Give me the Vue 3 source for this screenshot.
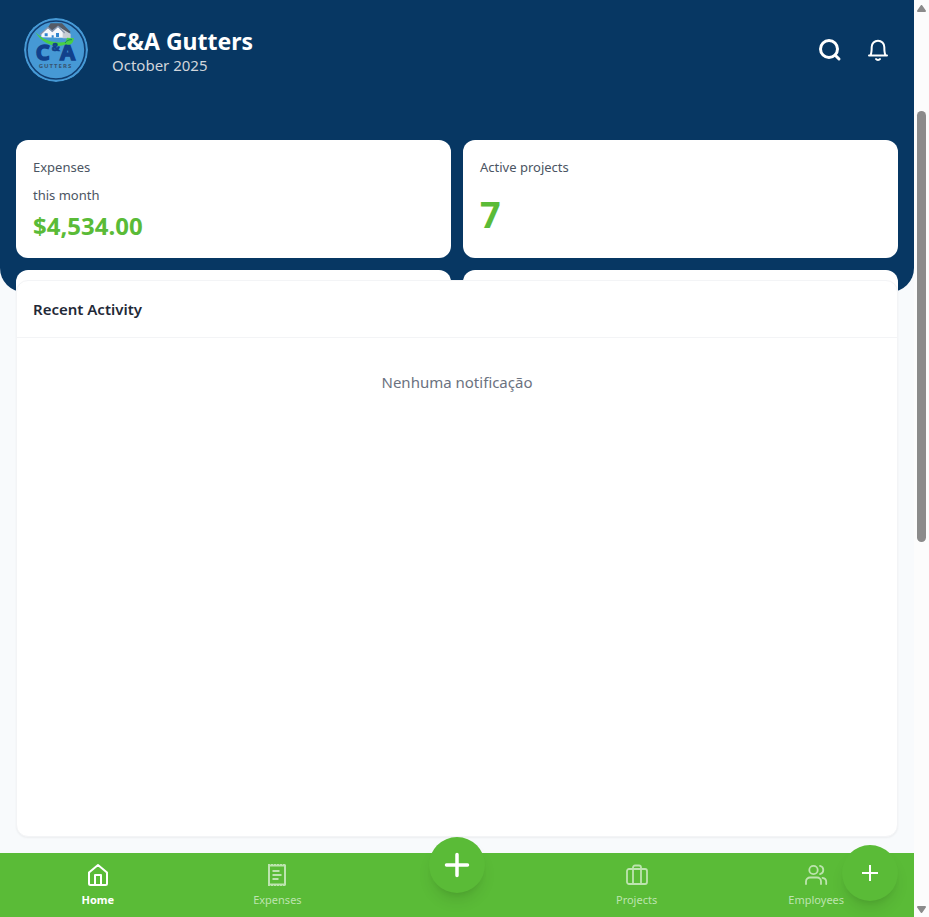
<script setup>
import { ref } from 'vue'

const stats = ref([
  { title: 'Expenses', note: 'this month', value: '$4,534.00', large: false },
  { title: 'Active projects', note: '', value: '7', large: true },
])
const active = ref('Home')
</script>

<template>
  <div class="screen">
    <div class="app">
      <header class="hero">
        <div class="topbar">
          <svg class="logo" viewBox="0 0 192 192" role="img" aria-label="C&amp;A Gutters logo">
            <circle cx="96" cy="96" r="96" fill="#4699d5" />
            <circle cx="96" cy="96" r="87" fill="none" stroke="#103d70" stroke-width="5" />
            <path d="M70 31 80 16h34l26 26-8 6-28-24-22 14z" fill="#555b66" />
            <path d="M52 58V47l20-17 12 11 18-15 16 16v17z" fill="#f5f7fb" />
            <path d="M104 26 140 48v13h-24V42z" fill="#c8ccd3" />
            <path d="M48 50 72 28l13 12 17-15 20 20" fill="none" stroke="#8795ad" stroke-width="4" />
            <path d="M62 46h9v9h-9zM96 45h9v12h-9zM83 52h6v7h-6z" fill="#3185cf" />
            <text class="logo-letter" x="35" y="126">C</text>
            <text class="logo-letter" x="108" y="126">A</text>
            <path d="M34 42c25 27 62 36 91 29l4-12 21 2c-3 16-10 23-24 18-32 13-73-3-92-37z" fill="#48cf45" />
            <path d="M123 75c5-7 12-11 21-10" fill="none" stroke="#16885b" stroke-width="3" />
            <text class="logo-and" x="83" y="98">&amp;</text>
            <text class="logo-word" x="44" y="149">GUTTERS</text>
          </svg>
          <div class="brand">
            <h1>C&amp;A Gutters</h1>
            <p>October 2025</p>
          </div>
          <div class="actions">
            <button type="button" aria-label="Search">
              <svg viewBox="0 0 24 24" class="icon search"><circle cx="11" cy="11" r="8.500" /><path d="m17.500 17.500 3.500 3.500" /></svg>
            </button>
            <button type="button" aria-label="Notifications">
              <svg viewBox="0 0 24 24" class="icon bell"><path d="M3 17.500h18M4.500 17.200c1-2 1.200-3.500 1.200-8.200a6.300 6.300 0 0 1 12.600 0c0 4.700.2 6.200 1.200 8.200M10 21a2.200 1.500 0 0 0 4 0" /></svg>
            </button>
          </div>
        </div>
        <div class="stats">
          <article v-for="s in stats" :key="s.title" class="stat">
            <p class="label">{{ s.title }}</p>
            <p v-if="s.note" class="label note">{{ s.note }}</p>
            <strong :class="{ large: s.large }">{{ s.value }}</strong>
          </article>
          <article class="peek"></article>
          <article class="peek"></article>
        </div>
      </header>

      <main class="content">
        <section class="activity">
          <h2>Recent Activity</h2>
          <p class="empty">Nenhuma notificação</p>
        </section>
      </main>

      <nav class="nav">
        <a href="#home" :class="{ current: active === 'Home' }" @click="active = 'Home'">
          <svg viewBox="0 0 24 24" class="icon"><path d="M3 9.500 12 2l9 7.500V20.500a1.500 1.500 0 0 1-1.500 1.500h-15a1.500 1.500 0 0 1-1.500-1.500zM9 22V12h6v10" /></svg>
          <span>Home</span>
        </a>
        <a href="#expenses" :class="{ current: active === 'Expenses' }" @click="active = 'Expenses'">
          <svg viewBox="0 0 24 24" class="icon receipt"><path d="M4 2v20M20 2v20M7.500 8h7M7.500 12h9M7.500 16h6" /><path d="M3 2.500h18M3 21.500h18" /><path class="teeth" d="M3 1.500h18M3 22.500h18" /></svg>
          <span>Expenses</span>
        </a>
        <div class="middle">
          <button type="button" class="round add" aria-label="Add">
            <svg viewBox="0 0 28 28"><path d="M14 3.500v21M3.500 14h21" /></svg>
          </button>
        </div>
        <a href="#projects" :class="{ current: active === 'Projects' }" @click="active = 'Projects'">
          <svg viewBox="0 0 24 24" class="icon thin"><rect x="2" y="6" width="20" height="15" rx="2" /><path d="M8 21V4.500a2 2 0 0 1 2-2h4a2 2 0 0 1 2 2V21" /></svg>
          <span>Projects</span>
        </a>
        <a href="#employees" :class="{ current: active === 'Employees' }" @click="active = 'Employees'">
          <svg viewBox="0 0 24 24" class="icon thin"><circle cx="9.500" cy="7" r="4.200" /><path d="M2 21v-2.500a4 4 0 0 1 4-4h7a4 4 0 0 1 4 4V21M16 2.900a4.200 4.200 0 0 1 0 8.200M18.500 14.800c2.200.400 3.700 1.600 3.700 3.700V21" /></svg>
          <span>Employees</span>
        </a>
      </nav>

      <button type="button" class="round quick" aria-label="Quick add">
        <svg viewBox="0 0 24 24"><path d="M12 4v16M4 12h16" /></svg>
      </button>
    </div>

    <div class="scrollbar" aria-hidden="true">
      <svg viewBox="0 0 9 7"><path d="M1 6h7L4.500 1z" /></svg>
      <div class="track"><span class="lead"></span><span class="thumb"></span><span class="rest"></span></div>
      <svg viewBox="0 0 9 7"><path d="M1 1h7L4.500 6z" /></svg>
    </div>
  </div>
</template>

<style>
body { margin: 0; background: #f9fafb; }
</style>

<style scoped>
* { box-sizing: border-box; }
h1, h2, p { margin: 0; }
button { border: 0; padding: 0; background: none; color: inherit; font: inherit; cursor: pointer; }
.screen { display: flex; height: 100vh; overflow: hidden; font-family: "Segoe UI", "Noto Sans", sans-serif; }
.app { position: relative; display: flex; flex: 1; min-width: 0; flex-direction: column; background: #f8fafc; }
.hero { padding: 16px 16px 0; background: #073763; border-radius: 0 0 24px 24px; }
.topbar { display: flex; align-items: center; height: 68px; padding: 0 0 0 8px; color: #fff; }
.logo { width: 64px; height: 64px; flex: none; border-radius: 50%; }
.logo-letter { font: 700 66px "Noto Sans", sans-serif; fill: #11418c; stroke: #11418c; stroke-width: 4px; }
.logo-and { font: 700 32px "Noto Sans", sans-serif; fill: #11418c; stroke: #11418c; stroke-width: 2px; }
.logo-word { font: 700 18px "Noto Sans", sans-serif; letter-spacing: 3px; fill: #38546f; }
.brand { flex: 1; margin-left: 24px; padding-top: 6px; }
.brand h1 { font-size: 23px; line-height: 24px; font-weight: 700; }
.brand p { font-size: 15px; line-height: 24px; color: #d1d5db; }
.actions { display: flex; gap: 8px; }
.actions button { display: grid; place-items: center; width: 40px; height: 40px; }
.icon { display: block; width: 24px; height: 24px; fill: none; stroke: currentColor; stroke-width: 2; stroke-linecap: round; stroke-linejoin: round; }
.search { stroke-width: 3; }
.stats { display: grid; grid-template-columns: 1fr 1fr; grid-template-rows: 118px 22px; gap: 12px; margin-top: 56px; }
.stat { padding: 17px; background: #fff; border-radius: 12px; }
.stat .label { font-size: 13px; line-height: 20px; color: #4b5563; }
.stat .note { margin-top: 8px; }
.stat strong { display: block; margin-top: 5px; color: #5abb37; font-size: 24px; line-height: 32px; }
.stat .large { margin-top: 18px; font-size: 36px; line-height: 40px; }
.peek { background: #fff; border-radius: 12px 12px 0 0; }
.content { display: flex; flex: 1; min-height: 0; margin-top: -12px; padding: 0 16px 16px; }
.activity { flex: 1; background: #fff; border: 1px solid #f3f4f6; border-radius: 12px; box-shadow: 0 1px 2px rgba(0, 0, 0, .05); }
.activity h2 { padding: 16px; border-bottom: 1px solid #f3f4f6; color: #1f2937; font-size: 15px; line-height: 24px; font-weight: 600; }
.empty { padding: 32px 16px; color: #6b7280; font-size: 15px; line-height: 24px; text-align: center; }
.nav { display: grid; grid-template-columns: repeat(5, 1fr); height: 64px; padding: 0 8px; background: #5abb37; }
.nav a { display: flex; flex-direction: column; align-items: center; padding-top: 10px; gap: 5px; color: #fff; text-decoration: none; font-size: 11px; line-height: 16px; }
.nav a:not(.current) { color: #bde4af; }
.nav .current { font-weight: 700; }
.nav .icon { stroke-width: 2; }
.nav .thin { stroke-width: 1.8; }
.nav .teeth { stroke-width: 1; stroke-dasharray: 2 1; stroke-linecap: butt; }
.nav .receipt { stroke-linecap: butt; }
.middle { display: flex; justify-content: center; }
.round { display: grid; place-items: center; width: 56px; height: 56px; border-radius: 50%; background: #5abb37; color: #fff; box-shadow: 0 10px 15px -3px rgba(0, 0, 0, .1), 0 4px 6px -4px rgba(0, 0, 0, .1); }
.round svg { fill: none; stroke: currentColor; stroke-linecap: round; }
.add { margin-top: -16px; }
.add svg { width: 28px; height: 28px; stroke-width: 3.500; }
.quick { position: absolute; right: 16px; bottom: 16px; }
.quick svg { width: 24px; height: 24px; stroke-width: 2; stroke-linecap: butt; }
.scrollbar { display: flex; width: 15px; flex-direction: column; align-items: center; padding: 5px 0 4px; background: #fcfcfc; }
.scrollbar > svg { width: 9px; height: 7px; flex: none; fill: #8b8b8b; stroke: #8b8b8b; stroke-width: 2; stroke-linejoin: round; }
.track { display: flex; flex: 1; width: 9px; flex-direction: column; }
.lead { flex: 99; }
.thumb { flex: 431; background: #8b8b8b; border-radius: 5px; }
.rest { flex: 364; }
</style>
